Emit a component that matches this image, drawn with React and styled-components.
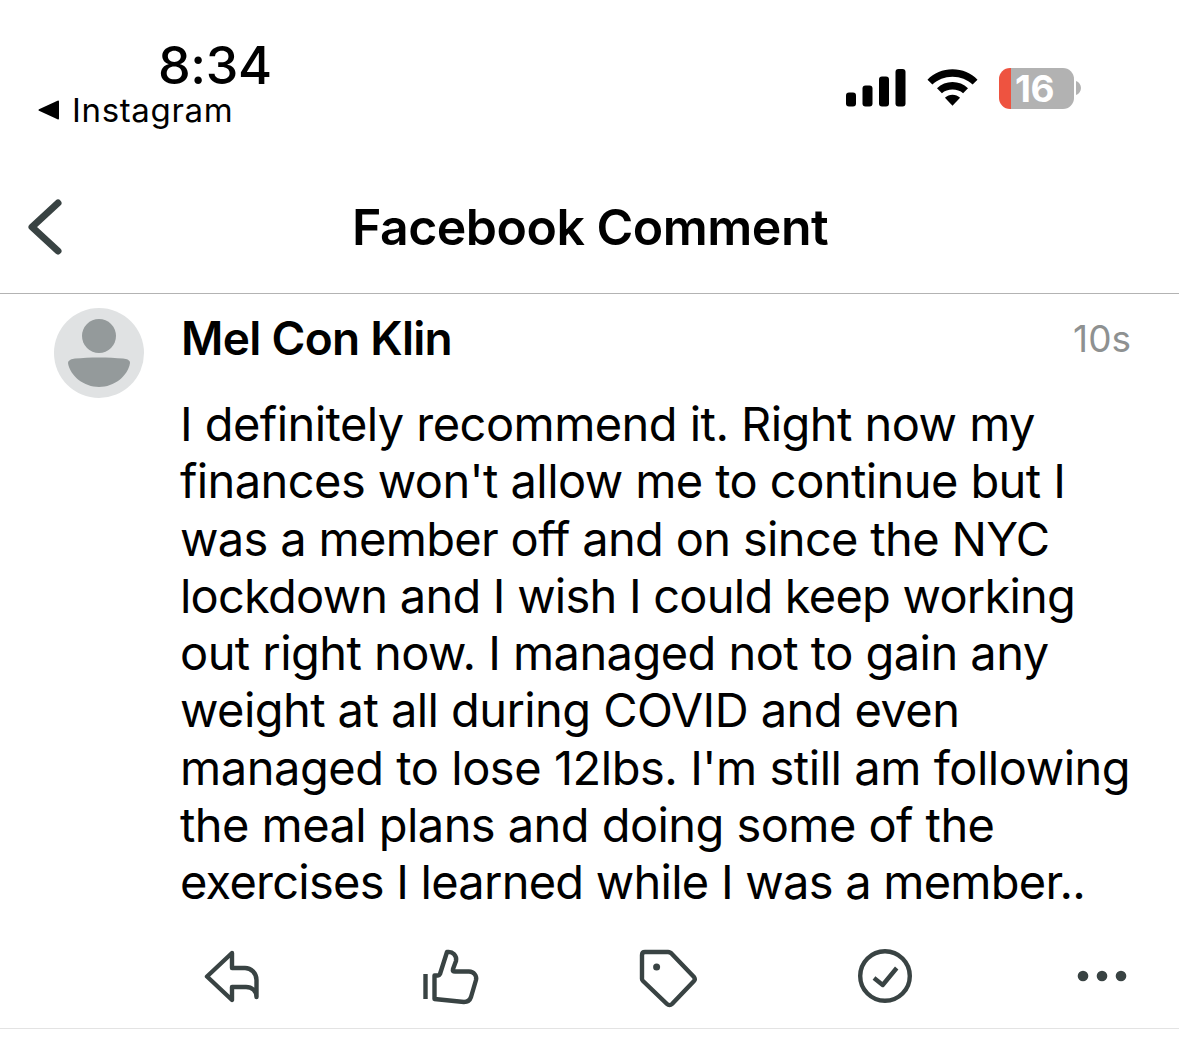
import React from "react";
import styled, { createGlobalStyle } from "styled-components";

const Global = createGlobalStyle`
  html, body { margin: 0; padding: 0; background: #fff; }
  body { font-family: Inter, "Liberation Sans", sans-serif; color: #000; }
`;
const Page = styled.div`
  width: 1179px;
  height: 1043px;
  overflow: hidden;
  background: #fff;
  display: flex;
  flex-direction: column;
`;
const StatusBar = styled.div`
  height: 150px;
  box-sizing: border-box;
  display: flex;
  justify-content: space-between;
  padding: 39px 98px 0 38px;
`;
const TimeBlock = styled.div`
  width: 232px;
  display: flex;
  flex-direction: column;
`;
const Time = styled.div`
  font-size: 52px;
  line-height: 54px;
  font-weight: 500;
  letter-spacing: -0.4px;
  padding-left: 120px;
  white-space: nowrap;
`;
const BackApp = styled.div`
  display: flex;
  align-items: center;
  gap: 12px;
  font-size: 33px;
  line-height: 36px;
  letter-spacing: 0.65px;
  white-space: nowrap;
  margin-top: -1px;
`;
const StatusIcons = styled.div`
  display: flex;
  align-items: center;
  gap: 21px;
  height: 44px;
  margin-top: 27px;
`;
const Battery = styled.div`
  display: flex;
  align-items: center;
  gap: 2px;
`;
const BatteryBody = styled.div`
  width: 75px;
  height: 41px;
  border-radius: 11px;
  background: linear-gradient(to right, #ee5340 0 12px, #b2b2b2 12px);
  color: #fff;
  font-size: 37px;
  font-weight: 700;
  line-height: 41px;
  box-sizing: border-box;
  padding-left: 16px;
  letter-spacing: -0.5px;
`;
const Header = styled.div`
  height: 144px;
  box-sizing: border-box;
  border-bottom: 1px solid #b3b3b3;
  display: flex;
  align-items: center;
  padding: 10px 0 0 26px;
`;
const Title = styled.h1`
  margin: 0;
  flex: 1;
  padding-left: 288px;
  font-size: 50px;
  font-weight: 600;
  line-height: 56px;
  letter-spacing: -0.5px;
  white-space: nowrap;
`;
const Comment = styled.div`
  display: flex;
  padding: 14px 48px 0 54px;
  gap: 36px;
  height: 632px;
  box-sizing: border-box;
`;
const Avatar = styled.div`
  width: 90px;
  height: 90px;
  flex: none;
`;
const Main = styled.div`
  flex: 1;
  min-width: 0;
`;
const NameRow = styled.div`
  display: flex;
  justify-content: space-between;
  align-items: center;
  height: 60px;
`;
const Name = styled.div`
  font-size: 46px;
  font-weight: 600;
  letter-spacing: -0.7px;
  margin-left: 1px;
`;
const Age = styled.div`
  font-size: 37px;
  color: #8e9191;
`;
const Body = styled.div`
  margin-top: 27px;
  font-size: 47px;
  line-height: 57.25px;
  white-space: nowrap;
`;
const Line = styled.div`
  letter-spacing: ${(p) => p.$spacing}px;
`;
const Actions = styled.div`
  height: 103px;
  box-sizing: border-box;
  border-bottom: 1px solid #e3e3e3;
  display: flex;
  align-items: center;
  padding: 0 47px 0 202px;
  justify-content: space-between;
`;
const Action = styled.div`
  width: 60px;
  height: 60px;
  display: flex;
  align-items: center;
  justify-content: center;
`;
const ActionIcon = styled.svg`
  overflow: visible;
`;

const stroke = { fill: "none", stroke: "#394343", strokeWidth: 4.4, strokeLinejoin: "round" };

const lines = [
  ["I definitely recommend it. Right now my", -0.55],
  ["finances won't allow me to continue but I", -0.58],
  ["was a member off and on since the NYC", -0.67],
  ["lockdown and I wish I could keep working", -0.77],
  ["out right now. I managed not to gain any", -0.55],
  ["weight at all during COVID and even", -0.57],
  ["managed to lose 12lbs. I'm still am following", -0.46],
  ["the meal plans and doing some of the", -0.56],
  ["exercises I learned while I was a member..", -0.75],
];

export default function App() {
  return (
    <Page>
      <Global />
      <StatusBar>
        <TimeBlock>
          <Time>8:34</Time>
          <BackApp>
            <svg width="22" height="20" viewBox="0 0 22 20"><path d="M21 1.500v17a1 1 0 0 1-1.500.8L1 10.800a1 1 0 0 1 0-1.600L19.500.7A1 1 0 0 1 21 1.500z" fill="#000" /></svg>
            Instagram
          </BackApp>
        </TimeBlock>
        <StatusIcons>
          <svg width="60" height="38" viewBox="0 0 60 38">
            <rect x="0" y="23.500" width="10" height="14" rx="3" />
            <rect x="16.500" y="16.500" width="10" height="21" rx="3" />
            <rect x="33" y="7.500" width="10" height="30" rx="3" />
            <rect x="49.500" y="0" width="10" height="37.500" rx="3" />
          </svg>
          <svg width="51" height="38" viewBox="0 0 52 38">
            <path d="M26 0c10 0 19 4 25.500 10.500L46.500 15.500C41 10.500 34 7.500 26 7.500S11 10.500 5.500 15.500L.5 10.500C7 4 16 0 26 0z" />
            <path d="M26 13c6 0 11.500 2.300 15.800 6.300l-5 5C34 21.800 30 20.500 26 20.500s-8 1.300-10.800 3.800l-5-5C14.500 15.300 20 13 26 13z" />
            <path d="M26 26c3 0 5.500 1 7.700 3L26 37l-7.700-8c2.200-2 4.700-3 7.700-3z" />
          </svg>
          <Battery>
            <BatteryBody>16</BatteryBody>
            <svg width="5" height="14" viewBox="0 0 5 14"><path d="M0 0c3 1 5 4 5 7s-2 6-5 7z" fill="#b2b2b2" /></svg>
          </Battery>
        </StatusIcons>
      </StatusBar>
      <Header>
        <svg width="38" height="60" viewBox="0 0 38 60"><path d="M32 6 6 30l26 24" fill="none" stroke="#394343" strokeWidth="7" strokeLinecap="round" strokeLinejoin="round" /></svg>
        <Title>Facebook Comment</Title>
      </Header>
      <Comment>
        <Avatar>
          <svg width="90" height="90" viewBox="0 0 90 90">
            <circle cx="45" cy="45" r="45" fill="#e0e2e3" />
            <circle cx="45" cy="28" r="17" fill="#949a9b" />
            <path d="M14 55C14 52 18 51 21 50.500C35 49 55 49 69 50.500C73 51 76 52 76 55C74 68 60 79 45 79C30 79 16 68 14 55Z" fill="#949a9b" />
          </svg>
        </Avatar>
        <Main>
          <NameRow>
            <Name>Mel Con Klin</Name>
            <Age>10s</Age>
          </NameRow>
          <Body>
            {lines.map(([text, spacing]) => (
              <Line key={text} $spacing={spacing}>{text}</Line>
            ))}
          </Body>
        </Main>
      </Comment>
      <Actions>
        <Action>
          <ActionIcon width="60" height="60" viewBox="0 0 60 60"><path d="M30 6 5 29.500 30 53V40H44C50 40 54.500 44 54.500 50V33C54.500 26 49 21 43 21H30Z" {...stroke} /></ActionIcon>
        </Action>
        <Action>
          <ActionIcon width="60" height="60" viewBox="0 0 60 60">
            <path d="M5.500 27v25" {...stroke} />
            <path d="M14.500 28.500H18C19 28.500 19.500 28 20 27L27 5C33 4 37 9 36 14L33 22C32.500 24 33 24.500 35 24.500H49C54 24.500 57 29 56 33L51 50C50 53 48 55 44 55L14.500 52Z" {...stroke} />
          </ActionIcon>
        </Action>
        <Action>
          <ActionIcon width="60" height="60" viewBox="0 0 60 60">
            <path d="M8 5H31C32 5 33 5.500 34 6L57 30C58 31.500 58 33 57 34L35 57C33.500 58.500 31.500 58.500 30 57L6 34C5.500 33.500 5 33 5 32V8C5 6 6 5 8 5Z" {...stroke} />
            <circle cx="19.600" cy="20" r="3.500" fill="#394343" />
          </ActionIcon>
        </Action>
        <Action>
          <ActionIcon width="60" height="60" viewBox="0 0 60 60">
            <circle cx="30" cy="29" r="24.800" {...stroke} />
            <path d="M19 31l8.700 7 14-17" {...stroke} />
          </ActionIcon>
        </Action>
        <Action>
          <ActionIcon width="60" height="60" viewBox="0 0 60 60">
            <circle cx="11" cy="29" r="5.300" fill="#394343" />
            <circle cx="30" cy="29" r="5.300" fill="#394343" />
            <circle cx="49" cy="29" r="5.300" fill="#394343" />
          </ActionIcon>
        </Action>
      </Actions>
    </Page>
  );
}
